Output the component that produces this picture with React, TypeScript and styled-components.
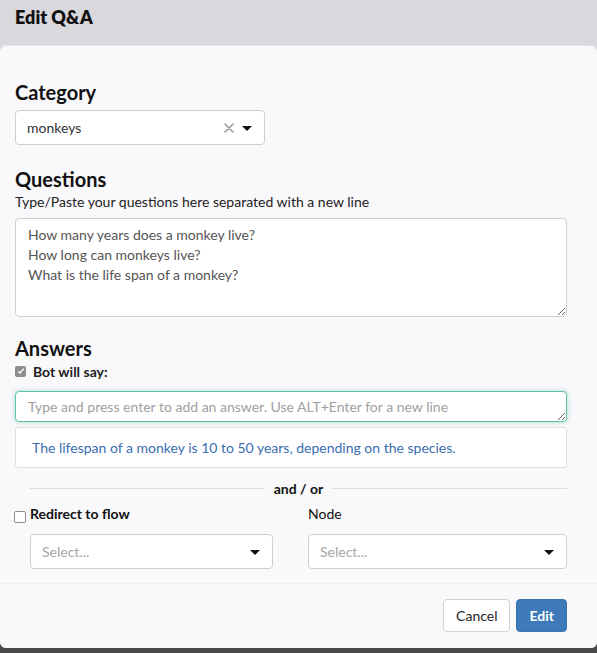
import React from "react";
import styled, { createGlobalStyle } from "styled-components";

const GlobalStyle = createGlobalStyle`
  html, body {
    margin: 0;
    padding: 0;
    background: #4a4a4a;
  }
  body {
    font-family: Lato, "Open Sans", sans-serif;
    font-size: 14px;
    color: #111;
  }
  * {
    box-sizing: border-box;
  }
`;

const Modal = styled.div`
  width: 597px;
  height: 648px;
  background: #d9d8dc;
  border-radius: 0 0 6px 6px;
  display: flex;
  flex-direction: column;
  overflow: hidden;
`;

const Header = styled.div`
  height: 46px;
  padding: 5px 15px 0;
  display: flex;
  align-items: flex-start;
  border-bottom: 1px solid #e4e3e7;
`;

const Title = styled.h3`
  margin: 0;
  font-size: 18px;
  font-weight: 800;
  line-height: 24px;
  color: #111;
`;

const Body = styled.div`
  background: #f9f8fb;
  border-radius: 6px 6px 0 0;
  padding: 34px 30px 14px 15px;
  display: flex;
  flex-direction: column;
`;

const SectionTitle = styled.h4<{ $gap?: number }>`
  margin: ${(p) => p.$gap ?? 0}px 0 0;
  font-size: 20px;
  font-weight: 700;
  line-height: 24px;
  color: #111;
`;

const Help = styled.div`
  font-size: 14px;
  line-height: 21px;
  color: #222;
`;

const SelectBox = styled.div<{ $width?: string }>`
  width: ${(p) => p.$width ?? "100%"};
  height: 35px;
  background: #fff;
  border: 1px solid #cfcfd3;
  border-radius: 4px;
  display: flex;
  align-items: center;
  padding: 0 12px 0 11px;
  margin-top: 6px;
`;

const SelectValue = styled.span<{ $placeholder?: boolean }>`
  flex: 1;
  font-size: 14px;
  color: ${(p) => (p.$placeholder ? "#a5a5a8" : "#333")};
`;

const ClearIcon = styled.span`
  width: 12px;
  height: 12px;
  display: flex;
  align-items: center;
  justify-content: center;
  margin-right: 7px;
`;

const Caret = styled.span`
  width: 0;
  height: 0;
  border-left: 5px solid transparent;
  border-right: 5px solid transparent;
  border-top: 5px solid #111;
  margin-top: 1px;
`;

const QuestionsArea = styled.textarea`
  display: block;
  width: 100%;
  height: 99px;
  margin-top: 6px;
  padding: 6px 12px;
  border: 1px solid #cfcfd3;
  border-radius: 4px;
  background: #fff;
  font-family: Lato, sans-serif;
  font-size: 14px;
  line-height: 20px;
  color: #555;
  resize: vertical;
  outline: none;
`;

const CheckRow = styled.label`
  display: flex;
  align-items: center;
  gap: 7px;
  height: 20px;
  margin-top: 1px;
  font-weight: 700;
  font-size: 14px;
  color: #222;
`;

const FakeCheck = styled.span`
  width: 11px;
  height: 11px;
  border-radius: 2px;
  background: #8d8d90;
  display: flex;
  align-items: center;
  justify-content: center;
`;

const AnswerInput = styled.textarea`
  display: block;
  width: 100%;
  height: 31px;
  margin-top: 10px;
  padding: 6px 12px;
  border: 1px solid #5fc2a8;
  border-radius: 4px;
  box-shadow: 0 0 5px rgba(95, 194, 168, 0.55);
  background: #fff;
  font-family: Lato, sans-serif;
  font-size: 14px;
  line-height: 17px;
  color: #555;
  resize: vertical;
  outline: none;

  &::placeholder {
    color: #a0a0a4;
  }
`;

const AnswerList = styled.div`
  margin-top: 5px;
  height: 41px;
  background: #fff;
  border: 1px solid #dedde1;
  border-radius: 3px;
  display: flex;
  align-items: center;
  padding: 0 16px;
  color: #3a6db1;
  font-size: 14px;
`;

const Redirect = styled.div`
  padding-left: 15px;
  margin-top: 11px;
`;

const Divider = styled.div`
  display: flex;
  align-items: center;
  gap: 9px;
  height: 18px;
  font-weight: 700;
  font-size: 14px;
  color: #111;

  &::before,
  &::after {
    content: "";
    flex: 1;
    height: 1px;
    background: #dcdbe0;
  }
`;

const FlowGrid = styled.div`
  display: grid;
  grid-template-columns: 243px 259px;
  column-gap: 35px;
  margin-top: 7px;
`;

const FlowLabel = styled.div<{ $bold?: boolean }>`
  position: relative;
  font-size: 14px;
  line-height: 20px;
  font-weight: ${(p) => (p.$bold ? 700 : 400)};
  color: #111;
`;

const EmptyCheck = styled.span`
  position: absolute;
  left: -16px;
  top: 7px;
  width: 12px;
  height: 12px;
  border: 1px solid #8f8f93;
  border-radius: 2px;
  background: #fff;
`;

const FlowSelect = styled(SelectBox)`
  margin-top: 10px;
`;

const Footer = styled.div`
  flex: 1;
  background: #f9f8fb;
  border-top: 1px solid #efeef2;
  display: flex;
  justify-content: flex-end;
  align-items: flex-start;
  gap: 6px;
  padding: 15px 30px 0;
`;

const Button = styled.button<{ $primary?: boolean }>`
  height: 33px;
  padding: 0 12px;
  border-radius: 4px;
  font-family: Lato, sans-serif;
  font-size: 14px;
  font-weight: ${(p) => (p.$primary ? 700 : 400)};
  border: 1px solid ${(p) => (p.$primary ? "#3a73ae" : "#d2d1d5")};
  background: ${(p) => (p.$primary ? "#3e7ab7" : "#fff")};
  color: ${(p) => (p.$primary ? "#fff" : "#222")};
`;

const Select: React.FC<{ value?: string; clearable?: boolean; width?: string; flow?: boolean }> = ({
  value,
  clearable,
  width,
  flow,
}) => {
  const Box = flow ? FlowSelect : SelectBox;
  return (
    <Box $width={width}>
      <SelectValue $placeholder={!value}>{value ?? "Select..."}</SelectValue>
      {clearable && (
        <ClearIcon>
          <svg width="10" height="10" viewBox="0 0 10 10">
            <path d="M1 1L9 9M9 1L1 9" stroke="#9a9a9d" strokeWidth="1.6" strokeLinecap="round" />
          </svg>
        </ClearIcon>
      )}
      <Caret />
    </Box>
  );
};

export default function App() {
  return (
    <>
      <GlobalStyle />
      <Modal>
        <Header>
          <Title>Edit Q&amp;A</Title>
        </Header>
        <Body>
          <SectionTitle>Category</SectionTitle>
          <Select value="monkeys" clearable width="250px" />

          <SectionTitle $gap={22}>Questions</SectionTitle>
          <Help>Type/Paste your questions here separated with a new line</Help>
          <QuestionsArea
            readOnly
            value={"How many years does a monkey live?\nHow long can monkeys live?\nWhat is the life span of a monkey?"}
          />

          <SectionTitle $gap={19}>Answers</SectionTitle>
          <CheckRow>
            <FakeCheck>
              <svg width="8" height="8" viewBox="0 0 8 8">
                <path d="M1.2 4.2L3.1 6L6.8 1.6" stroke="#fff" strokeWidth="1.3" fill="none" />
              </svg>
            </FakeCheck>
            Bot will say:
          </CheckRow>
          <AnswerInput placeholder="Type and press enter to add an answer. Use ALT+Enter for a new line" />
          <AnswerList>The lifespan of a monkey is 10 to 50 years, depending on the species.</AnswerList>

          <Redirect>
            <Divider>and / or</Divider>
            <FlowGrid>
              <div>
                <FlowLabel $bold>
                  <EmptyCheck />
                  Redirect to flow
                </FlowLabel>
                <Select flow />
              </div>
              <div>
                <FlowLabel>Node</FlowLabel>
                <Select flow />
              </div>
            </FlowGrid>
          </Redirect>
        </Body>
        <Footer>
          <Button>Cancel</Button>
          <Button $primary>Edit</Button>
        </Footer>
      </Modal>
    </>
  );
}
